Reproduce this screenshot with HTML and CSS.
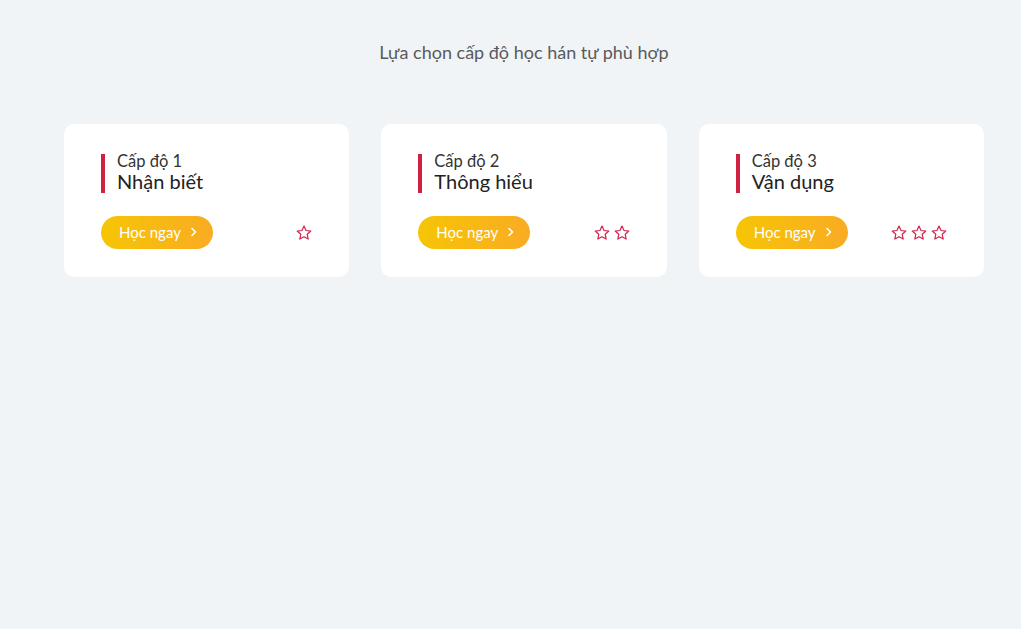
FILE: index.html
```html
<!DOCTYPE html>
<html lang="vi">
<head>
<meta charset="utf-8">
<link rel="stylesheet" href="styles.css">
</head>
<body>
<div class="page">
  <h1 class="heading">Lựa chọn cấp độ học hán tự phù hợp</h1>
  <div class="cards">
    <div class="card">
      <div class="label">
        <div class="level">Cấp độ 1</div>
        <div class="name">Nhận biết</div>
      </div>
      <div class="bottom">
        <a class="btn">Học ngay <span class="chev"><svg width="8" height="10" viewBox="0 0 8 10"><path d="M2 1.5 L5.5 5 L2 8.5" fill="none" stroke="#fff" stroke-width="1.6" stroke-linecap="round" stroke-linejoin="round"/></svg></span></a>
        <div class="stars">
          <svg class="star" viewBox="0 0 24 24"><path d="M12 2.8l2.7 5.9 6.4.7-4.8 4.3 1.3 6.4L12 16.9l-5.6 3.2 1.3-6.4-4.8-4.3 6.4-.7z"/></svg>
        </div>
      </div>
    </div>
    <div class="card">
      <div class="label">
        <div class="level">Cấp độ 2</div>
        <div class="name">Thông hiểu</div>
      </div>
      <div class="bottom">
        <a class="btn">Học ngay <span class="chev"><svg width="8" height="10" viewBox="0 0 8 10"><path d="M2 1.5 L5.5 5 L2 8.5" fill="none" stroke="#fff" stroke-width="1.6" stroke-linecap="round" stroke-linejoin="round"/></svg></span></a>
        <div class="stars">
          <svg class="star" viewBox="0 0 24 24"><path d="M12 2.8l2.7 5.9 6.4.7-4.8 4.3 1.3 6.4L12 16.9l-5.6 3.2 1.3-6.4-4.8-4.3 6.4-.7z"/></svg>
          <svg class="star" viewBox="0 0 24 24"><path d="M12 2.8l2.7 5.9 6.4.7-4.8 4.3 1.3 6.4L12 16.9l-5.6 3.2 1.3-6.4-4.8-4.3 6.4-.7z"/></svg>
        </div>
      </div>
    </div>
    <div class="card">
      <div class="label">
        <div class="level">Cấp độ 3</div>
        <div class="name">Vận dụng</div>
      </div>
      <div class="bottom">
        <a class="btn">Học ngay <span class="chev"><svg width="8" height="10" viewBox="0 0 8 10"><path d="M2 1.5 L5.5 5 L2 8.5" fill="none" stroke="#fff" stroke-width="1.6" stroke-linecap="round" stroke-linejoin="round"/></svg></span></a>
        <div class="stars">
          <svg class="star" viewBox="0 0 24 24"><path d="M12 2.8l2.7 5.9 6.4.7-4.8 4.3 1.3 6.4L12 16.9l-5.6 3.2 1.3-6.4-4.8-4.3 6.4-.7z"/></svg>
          <svg class="star" viewBox="0 0 24 24"><path d="M12 2.8l2.7 5.9 6.4.7-4.8 4.3 1.3 6.4L12 16.9l-5.6 3.2 1.3-6.4-4.8-4.3 6.4-.7z"/></svg>
          <svg class="star" viewBox="0 0 24 24"><path d="M12 2.8l2.7 5.9 6.4.7-4.8 4.3 1.3 6.4L12 16.9l-5.6 3.2 1.3-6.4-4.8-4.3 6.4-.7z"/></svg>
        </div>
      </div>
    </div>
  </div>
</div>
</body>
</html>
```
FILE: styles.css
```css
html, body {
  margin: 0;
  padding: 0;
  background: #f0f4f7;
  font-family: "Lato", "Noto Sans", sans-serif;
  height: 100%;
}
.page {
  padding: 40px 37px 0 64px;
}
.heading {
  margin: 0;
  text-align: center;
  font-size: 18px;
  font-weight: 400;
  color: #5a5a5a;
  line-height: 24px;
}
.cards {
  margin-top: 60px;
  display: grid;
  grid-template-columns: repeat(3, 1fr);
  gap: 32px;
}
.card {
  background: #fff;
  border-radius: 10px;
  padding: 30px 37px 28px 37px;
}
.label {
  border-left: 4px solid #d0223f;
  padding-left: 12px;
  height: 39px;
  display: flex;
  flex-direction: column;
  justify-content: center;
}
.level {
  font-size: 16.5px;
  color: #333;
  line-height: 16px;
  margin-top: -2px;
}
.name {
  font-size: 20px;
  color: #222;
  line-height: 24px;
}
.bottom {
  margin-top: 23px;
  display: flex;
  align-items: center;
  justify-content: space-between;
}
.btn {
  display: inline-flex;
  align-items: center;
  height: 33px;
  width: 112px;
  box-sizing: border-box;
  padding-left: 18px;
  padding-bottom: 1px;
  border-radius: 17px;
  background: linear-gradient(90deg, #f6c505 0%, #f9ac23 100%);
  color: #fff;
  font-size: 15px;
}
.chev {
  display: inline-flex;
  margin-left: 9px;
}
.stars {
  display: flex;
  gap: 2px;
  margin-right: -1px;
}
.star {
  width: 18px;
  height: 18px;
  fill: none;
  stroke: #d4224a;
  stroke-width: 1.6;
  stroke-linejoin: round;
}
```
